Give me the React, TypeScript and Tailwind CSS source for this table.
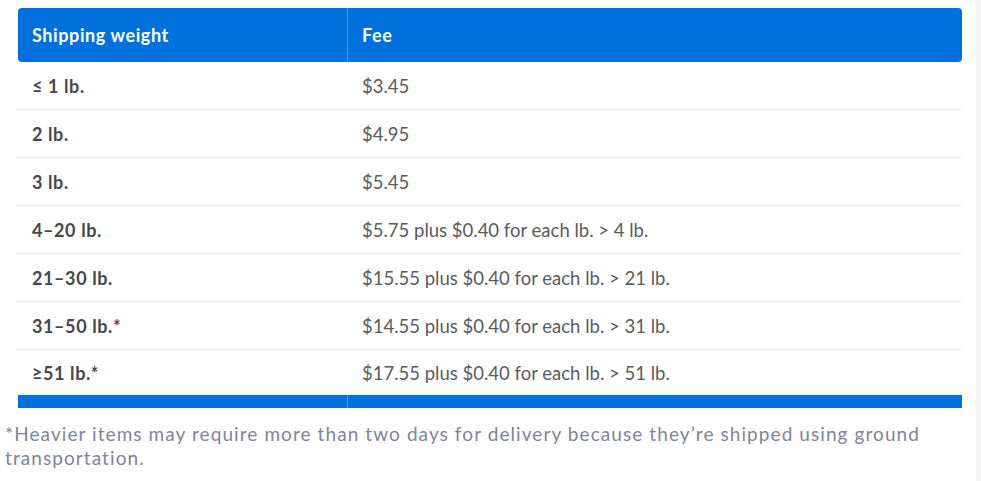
const rows: { weight: string; fee: string }[] = [
  { weight: '≤ 1 lb.', fee: '$3.45' },
  { weight: '2 lb.', fee: '$4.95' },
  { weight: '3 lb.', fee: '$5.45' },
  { weight: '4–20 lb.', fee: '$5.75 plus $0.40 for each lb. > 4 lb.' },
  { weight: '21–30 lb.', fee: '$15.55 plus $0.40 for each lb. > 21 lb.' },
  { weight: '31–50 lb.*', fee: '$14.55 plus $0.40 for each lb. > 31 lb.' },
  { weight: '≥51 lb.*', fee: '$17.55 plus $0.40 for each lb. > 51 lb.' },
]

export default function App() {
  return (
    <div className="flex h-[481px] w-[981px] bg-white font-['Lato',sans-serif]">
      <div className="flex-1 pt-2">
        <div className="ml-[18px] w-[944px]">
          {/* header */}
          <div className="flex h-[54px] rounded-[4px] bg-[#0071dc] text-[18px] font-bold tracking-[0.6px] text-white">
            <div className="flex w-[330px] items-center border-r border-[#4d9be6] px-[14px]">Shipping weight</div>
            <div className="flex flex-1 items-center px-[14px]">Fee</div>
          </div>

          {/* rows */}
          {rows.map((r, i) => (
            <div
              key={r.weight}
              className={`flex items-center pt-[2px] text-[18px] ${i < rows.length - 1 ? 'h-[48px] border-b border-[#ececec]' : 'h-[45px]'}`}
            >
              <div className="w-[330px] px-[14px] font-bold tracking-[0.6px] text-[#46474a]">{r.weight}</div>
              <div className="flex-1 px-[14px] text-[18.5px] text-[#5a5b5f]">{r.fee}</div>
            </div>
          ))}

          {/* footer bar */}
          <div className="flex h-[13px] bg-[#0071dc]">
            <div className="w-[330px] border-r border-[#4d9be6]" />
          </div>
        </div>

        <p className="mt-[14px] pl-[5px] pr-[40px] text-[19px] leading-[24px] tracking-[1.08px] text-[#7f8596]">
          *Heavier items may require more than two days for delivery because they’re shipped using ground
          transportation.
        </p>
      </div>
      <div className="w-[5px] bg-[#f5f5f5]" />
    </div>
  )
}
